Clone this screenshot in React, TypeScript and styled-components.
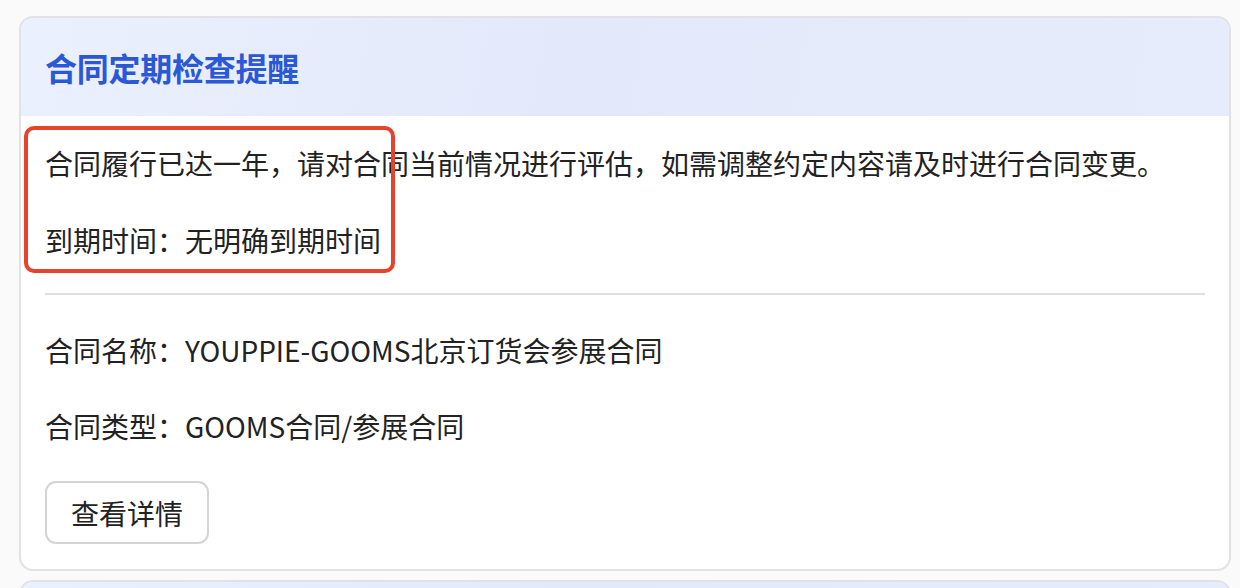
import React from "react";
import styled, { createGlobalStyle } from "styled-components";

const GlobalStyle = createGlobalStyle`
  html, body { margin: 0; padding: 0; background: #fafafa; }
  body { font-family: "Noto Sans CJK SC", "Noto Sans", sans-serif; color: #222; overflow: hidden; }
`;

const Page = styled.div`
  display: flex;
  flex-direction: column;
  gap: 9px;
  padding: 16px 9px 0 19px;
  width: 1212px;
`;

const Card = styled.section`
  background: #fff;
  border: 2px solid #e2e2e6;
  border-radius: 14px;
  overflow: hidden;
`;

const Header = styled.header`
  height: 98px;
  display: flex;
  align-items: center;
  padding: 0 24px;
  background: linear-gradient(100deg, #eaf0fd 0%, #e3e9fa 45%, #e6ecfb 100%);
`;

const Title = styled.h2`
  margin: 0;
  font-size: 32px;
  font-weight: 700;
  color: #2a58d6;
  letter-spacing: -0.25px;
`;

const Body = styled.div`
  display: flex;
  flex-direction: column;
  padding: 27px 24px 25px 24px;
`;

const Highlight = styled.div`
  position: relative;
  display: flex;
  flex-direction: column;
  gap: 37px;
  &::after {
    content: "";
    position: absolute;
    top: -17px;
    left: -21px;
    width: 360px;
    height: 136px;
    padding: 0 3px 3px 0;
    border: 4px solid #e5442b;
    border-radius: 10px;
    pointer-events: none;
  }
`;

const Line = styled.p`
  margin: 0;
  font-size: 28px;
  line-height: 40px;
  color: #222;
  white-space: nowrap;
`;

const Divider = styled.hr`
  border: none;
  height: 2px;
  background: #e0e0e0;
  margin: 33px 0 35px;
`;

const InfoList = styled.div`
  display: flex;
  flex-direction: column;
  gap: 36px;
`;

const Button = styled.button`
  align-self: flex-start;
  margin-top: 35px;
  height: 63px;
  padding: 0 24px;
  background: #fff;
  border: 2px solid #d4d4d8;
  border-radius: 11px;
  font-family: inherit;
  font-size: 28px;
  color: #222;
`;

export default function App() {
  return (
    <>
      <GlobalStyle />
      <Page>
        <Card>
          <Header>
            <Title>合同定期检查提醒</Title>
          </Header>
          <Body>
            <Highlight>
              <Line>合同履行已达一年，请对合同当前情况进行评估，如需调整约定内容请及时进行合同变更。</Line>
              <Line>到期时间：无明确到期时间</Line>
            </Highlight>
            <Divider />
            <InfoList>
              <Line>合同名称：YOUPPIE-GOOMS北京订货会参展合同</Line>
              <Line>合同类型：GOOMS合同/参展合同</Line>
            </InfoList>
            <Button>查看详情</Button>
          </Body>
        </Card>
        <Card>
          <Header />
        </Card>
      </Page>
    </>
  );
}
